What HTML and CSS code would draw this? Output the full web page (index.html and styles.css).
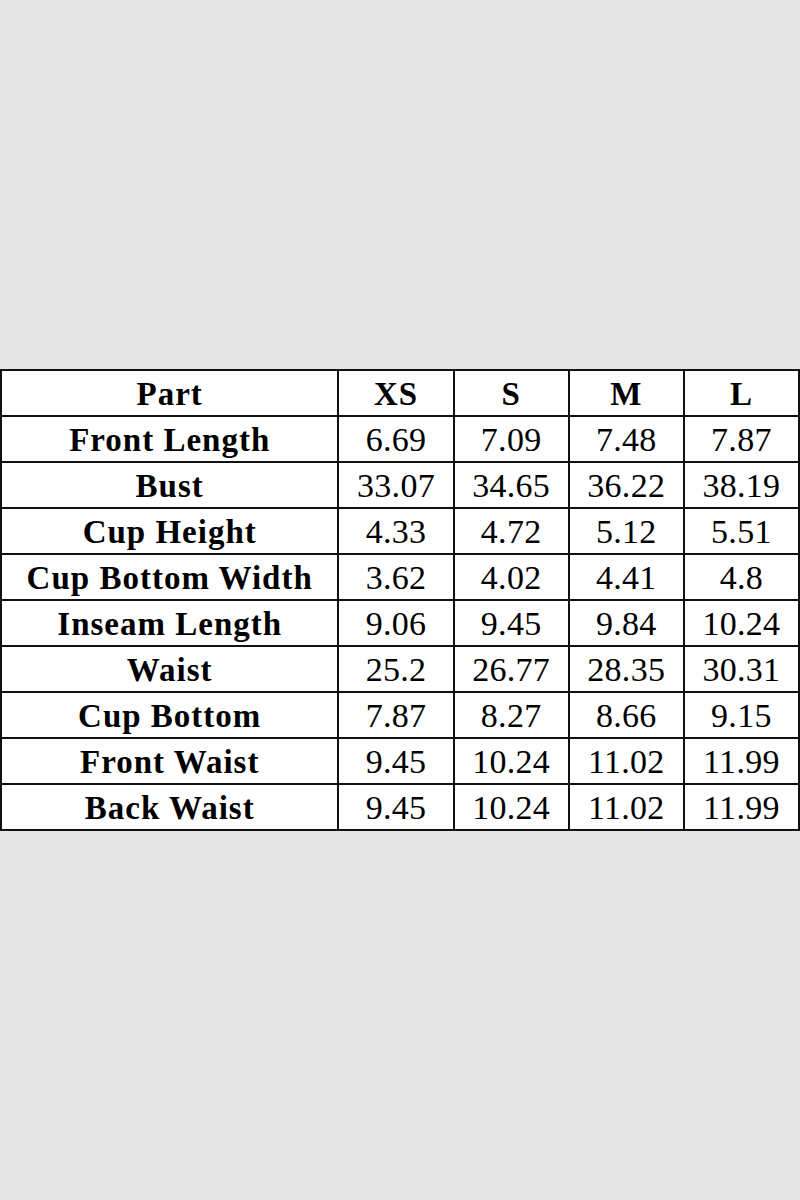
FILE: index.html
```html
<!DOCTYPE html>
<html>
<head>
<meta charset="utf-8">
<link rel="stylesheet" href="styles.css">
</head>
<body>
<div class="page">
  <table class="size-table">
    <colgroup>
      <col class="c-part">
      <col class="c-size">
      <col class="c-size">
      <col class="c-size">
      <col class="c-size">
    </colgroup>
    <thead>
      <tr><th>Part</th><th>XS</th><th>S</th><th>M</th><th>L</th></tr>
    </thead>
    <tbody>
      <tr><th>Front Length</th><td>6.69</td><td>7.09</td><td>7.48</td><td>7.87</td></tr>
      <tr><th>Bust</th><td>33.07</td><td>34.65</td><td>36.22</td><td>38.19</td></tr>
      <tr><th>Cup Height</th><td>4.33</td><td>4.72</td><td>5.12</td><td>5.51</td></tr>
      <tr><th>Cup Bottom Width</th><td>3.62</td><td>4.02</td><td>4.41</td><td>4.8</td></tr>
      <tr><th>Inseam Length</th><td>9.06</td><td>9.45</td><td>9.84</td><td>10.24</td></tr>
      <tr><th>Waist</th><td>25.2</td><td>26.77</td><td>28.35</td><td>30.31</td></tr>
      <tr><th>Cup Bottom</th><td>7.87</td><td>8.27</td><td>8.66</td><td>9.15</td></tr>
      <tr><th>Front Waist</th><td>9.45</td><td>10.24</td><td>11.02</td><td>11.99</td></tr>
      <tr><th>Back Waist</th><td>9.45</td><td>10.24</td><td>11.02</td><td>11.99</td></tr>
    </tbody>
  </table>
</div>
</body>
</html>
```
FILE: styles.css
```css
html, body {
  margin: 0;
  padding: 0;
}
body {
  background: #e6e6e6;
  font-family: "Liberation Serif", "Times New Roman", serif;
  color: #000;
}
.page {
  height: 1200px;
  display: flex;
  align-items: center;
  justify-content: center;
}
.size-table {
  width: 800px;
  border-collapse: collapse;
  background: #fff;
  table-layout: fixed;
}
.c-part { width: 337px; }
.c-size { width: 115px; }
.size-table th,
.size-table td {
  border: 2px solid #111;
  height: 42px;
  padding: 2px 0 0 0;
  text-align: center;
  vertical-align: middle;
  line-height: 42px;
}
.size-table th {
  font-weight: bold;
  font-size: 33px;
  letter-spacing: 1px;
}
.size-table td {
  font-weight: normal;
  font-size: 34px;
  letter-spacing: 0.3px;
}
```
